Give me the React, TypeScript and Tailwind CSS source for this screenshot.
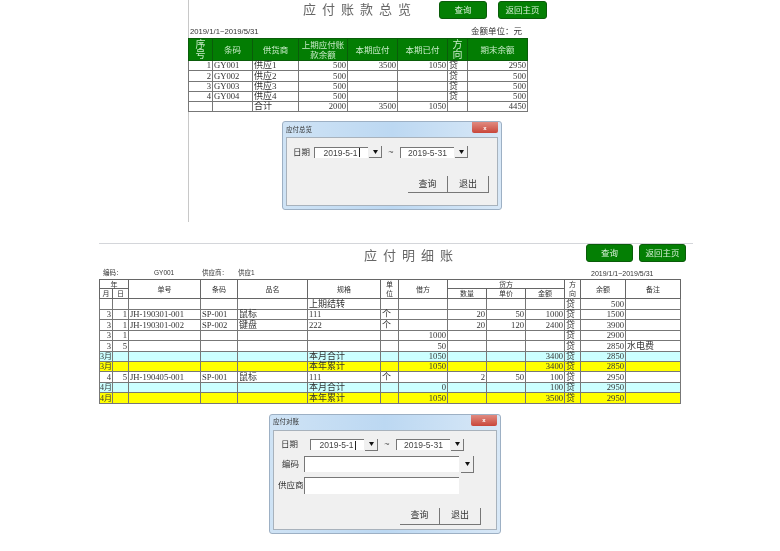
const cjk = "font-['Liberation_Sans','Noto_Sans_CJK_SC',sans-serif]";
const serif = "font-['Liberation_Serif','Noto_Sans_CJK_SC',serif]";

const GreenButton = ({ label, className }: { label: string; className: string }) => (
  <div className={`flex h-[18px] items-center justify-center rounded-[3px] border border-[#0a5c0a] bg-[#047f04] text-[8.5px] text-[#d8f0d8] ${className}`}>
    {label}
  </div>
);

const topCols = [24, 40, 46, 49, 50, 50, 20, 60];
const topRows = [
  ['1', 'GY001', '供应1', '500', '3500', '1050', '贷', '2950'],
  ['2', 'GY002', '供应2', '500', '', '', '贷', '500'],
  ['3', 'GY003', '供应3', '500', '', '', '贷', '500'],
  ['4', 'GY004', '供应4', '500', '', '', '贷', '500'],
  ['', '', '合计', '2000', '3500', '1050', '', '4450'],
];
const topHead = ['序\n号', '条码', '供货商', '上期应付账\n款余额', '本期应付', '本期已付', '方\n向', '期末余额'];

const bottomCols = [13, 16, 72, 37, 70, 73, 18, 49, 39, 39, 39, 16, 45, 55];
const bottomRows: { bg?: string; cells: string[] }[] = [
  { cells: ['', '', '', '', '', '上期结转', '', '', '', '', '', '贷', '500', ''] },
  { cells: ['3', '1', 'JH-190301-001', 'SP-001', '鼠标', '111', '个', '', '20', '50', '1000', '贷', '1500', ''] },
  { cells: ['3', '1', 'JH-190301-002', 'SP-002', '键盘', '222', '个', '', '20', '120', '2400', '贷', '3900', ''] },
  { cells: ['3', '1', '', '', '', '', '', '1000', '', '', '', '贷', '2900', ''] },
  { cells: ['3', '5', '', '', '', '', '', '50', '', '', '', '贷', '2850', '水电费'] },
  { bg: 'bg-[#ccffff]', cells: ['3月', '', '', '', '', '本月合计', '', '1050', '', '', '3400', '贷', '2850', ''] },
  { bg: 'bg-[#ffff00]', cells: ['3月', '', '', '', '', '本年累计', '', '1050', '', '', '3400', '贷', '2850', ''] },
  { cells: ['4', '5', 'JH-190405-001', 'SP-001', '鼠标', '111', '个', '', '2', '50', '100', '贷', '2950', ''] },
  { bg: 'bg-[#ccffff]', cells: ['4月', '', '', '', '', '本月合计', '', '0', '', '', '100', '贷', '2950', ''] },
  { bg: 'bg-[#ffff00]', cells: ['4月', '', '', '', '', '本年累计', '', '1050', '', '', '3500', '贷', '2950', ''] },
];
const bottomLeft = [2, 3, 4, 5, 6, 11, 13];
const isWide = (c: string) => /[^\x00-\x7f]/.test(c);

const Arrow = () => (
  <svg width="5" height="4" viewBox="0 0 5 4">
    <polygon points="0,0 5,0 2.5,4" fill="#111" />
  </svg>
);

const DropButton = ({ className = 'h-[12px]' }: { className?: string }) => (
  <div className={`flex w-[13px] items-center justify-center border-r border-b border-[#777] bg-[#f0f0f0] ${className}`}>
    <Arrow />
  </div>
);

const DateInput = ({ value, caret }: { value: string; caret?: boolean }) => (
  <div className="flex h-[11px] w-[54px] items-center justify-center border-t border-l border-[#777] bg-white text-[8.5px] leading-none text-[#444]">
    {value}
    {caret && <span className="ml-px h-[9px] w-px bg-[#222]" />}
  </div>
);

const DateRow = ({ labelClass }: { labelClass: string }) => (
  <div className="flex items-center">
    <span className={`whitespace-nowrap text-[8.5px] leading-none text-[#333] ${labelClass}`}>日期</span>
    <div className="ml-[4px] flex items-center">
      <DateInput value="2019-5-1" caret />
      <div className="ml-px"><DropButton /></div>
      <span className="w-[18px] text-center text-[9px] leading-none text-[#555]">~</span>
      <DateInput value="2019-5-31" />
      <div className="ml-px"><DropButton /></div>
    </div>
  </div>
);

const DialogButtons = ({ className }: { className: string }) => (
  <div className={`flex text-[9px] text-[#333] ${className}`}>
    <div className="flex h-[17px] w-[40px] items-center justify-center border-r border-b border-[#777] bg-[#f0f0f0]">查询</div>
    <div className="flex h-[17px] w-[41px] items-center justify-center border-r border-b border-[#777] bg-[#f0f0f0]">退出</div>
  </div>
);

const Dialog = ({ title, className, children }: { title: string; className: string; children: React.ReactNode }) => (
  <div className={`relative flex flex-col rounded-[3px] border border-[#9db0c4] bg-gradient-to-r from-[#cfe3f5] via-[#bcd8f2] to-[#d8e8f7] px-[3px] pb-[3px] ${className}`}>
    <div className="flex h-[15px] shrink-0 items-center text-[6.5px] text-[#333]">{title}</div>
    <div className="absolute right-[3px] top-0 flex h-[11px] w-[26px] items-center justify-center rounded-b-[2px] bg-gradient-to-b from-[#e08a80] to-[#c8453a] text-[6px] font-bold leading-none text-white">
      x
    </div>
    <div className="flex-1 border border-[#a8b2bc] bg-[#f0f0f0]">{children}</div>
  </div>
);

export default function App() {
  return (
    <div className={`h-[551px] w-[780px] overflow-hidden bg-white ${cjk} blur-[0.35px]`}>
      {/* 应付账款总览 */}
      <section className="ml-[188px] h-[222px] w-[360px] border-l border-[#c8c8c8]">
        <div className="flex items-start pt-px">
          <h1 className="ml-[114px] mt-px w-[136px] whitespace-nowrap text-[13px] font-normal leading-[15px] tracking-[6px] text-[#666]">
            应付账款总览
          </h1>
          <GreenButton label="查询" className="w-[48px]" />
          <GreenButton label="返回主页" className="ml-[11px] w-[49px]" />
        </div>
        <div className="mt-[6px] flex h-[13px] w-[338px] items-center justify-between pl-px text-[#333]">
          <span className="text-[7.7px] leading-none">2019/1/1~2019/5/31</span>
          <span className="mr-[5px] text-[8.5px] leading-none">金额单位：元</span>
        </div>
        <table className={`-ml-px w-[339px] table-fixed border-collapse text-[8.6px] leading-none text-[#333] ${serif}`}>
          <colgroup>
            {topCols.map((w, i) => <col key={i} style={{ width: w }} />)}
          </colgroup>
          <thead>
            <tr className="h-[22px] bg-[#037d03]">
              {topHead.map((h, i) => (
                <th key={i} className={`whitespace-pre-line border border-[#0a5c0a] p-0 text-center font-normal leading-[10px] text-[#c9ecc9] ${cjk} ${i === 0 || i === 6 ? 'text-[10px]' : 'text-[8.5px]'}`}>{h}</th>
              ))}
            </tr>
          </thead>
          <tbody>
            {topRows.map((row, r) => (
              <tr key={r} className="h-[10.3px]">
                {row.map((c, i) => (
                  <td key={i} className={`whitespace-nowrap border border-[#777] p-0 align-bottom leading-[9px] ${i === 1 || i === 2 || i === 6 ? 'pl-px text-left' : 'pr-px text-right'} ${isWide(c) ? 'text-[9px]' : ''}`}>{c}</td>
                ))}
              </tr>
            ))}
          </tbody>
        </table>
        <Dialog title="应付总览" className="ml-[93px] mt-[9px] h-[89px] w-[220px]">
          <div className="pt-[8px]">
            <DateRow labelClass="ml-[6px] w-[17px]" />
            <DialogButtons className="ml-[121px] mt-[18px]" />
          </div>
        </Dialog>
      </section>

      {/* 应付明细账 */}
      <section className="ml-[99px] mt-[21px] w-[594px] border-t border-[#d4d6da]">
        <div className="flex items-start">
          <h1 className="ml-[265px] mt-[4px] w-[222px] whitespace-nowrap text-[13px] font-normal leading-[15px] tracking-[6px] text-[#666]">
            应付明细账
          </h1>
          <GreenButton label="查询" className="w-[47px]" />
          <GreenButton label="返回主页" className="ml-[6px] w-[47px]" />
        </div>
        <div className="mt-[4px] flex h-[12px] items-center text-[6.5px] leading-none text-[#333]">
          <span className="ml-[4px] w-[51px]">编码：</span>
          <span className="w-[48px]">GY001</span>
          <span className="w-[36px]">供应商：</span>
          <span className="w-[353px]">供应1</span>
          <span className="text-[7px]">2019/1/1~2019/5/31</span>
        </div>
        <table className={`w-[581px] table-fixed border-collapse text-[8.6px] leading-none text-[#333] ${serif}`}>
          <colgroup>
            {bottomCols.map((w, i) => <col key={i} style={{ width: w }} />)}
          </colgroup>
          <thead className={`text-[7px] ${cjk}`}>
            <tr className="h-[9px]">
              <th colSpan={2} className="border border-[#666] p-0 font-normal">年</th>
              {['单号', '条码', '品名', '规格', '单\n位', '借方'].map((h) => (
                <th key={h} rowSpan={2} className="whitespace-pre-line border border-[#666] p-0 font-normal leading-[9px]">{h}</th>
              ))}
              <th colSpan={3} className="border border-[#666] p-0 font-normal">货方</th>
              {['方\n向', '余额', '备注'].map((h) => (
                <th key={h} rowSpan={2} className="whitespace-pre-line border border-[#666] p-0 font-normal leading-[9px]">{h}</th>
              ))}
            </tr>
            <tr className="h-[10px]">
              {['月', '日', '数量', '单价', '金额'].map((h) => (
                <th key={h} className="border border-[#666] p-0 font-normal">{h}</th>
              ))}
            </tr>
          </thead>
          <tbody>
            {bottomRows.map((row, r) => (
              <tr key={r} className={`${r === 0 ? 'h-[11px]' : 'h-[10.4px]'} ${row.bg ?? ''}`}>
                {row.cells.map((c, i) => {
                  const month = c.endsWith('月');
                  const left = bottomLeft.includes(i) || month;
                  return (
                    <td
                      key={i}
                      className={`whitespace-nowrap border border-[#777] p-0 align-bottom leading-[9px] ${left ? (month ? 'text-left' : 'pl-px text-left') : 'pr-px text-right'} ${month ? 'text-[8px]' : isWide(c) ? 'text-[9px]' : ''}`}
                    >
                      {c}
                    </td>
                  );
                })}
              </tr>
            ))}
          </tbody>
        </table>
        <Dialog title="应付对账" className="ml-[170px] mt-[10px] h-[120px] w-[232px]">
          <div className="pt-[8px]">
            <DateRow labelClass="ml-[7px] w-[25px]" />
            <div className="mt-[5px] flex items-center">
              <span className="w-[25px] text-right text-[8.5px] leading-none text-[#333]">编码</span>
              <div className="ml-[5px] h-[16px] w-[155px] border-t border-l border-[#777] bg-white" />
              <div className="ml-[2px]"><DropButton className="h-[17px]" /></div>
            </div>
            <div className="mt-[4px] flex items-center">
              <span className="ml-[4px] w-[25px] whitespace-nowrap text-[8.5px] leading-none text-[#333]">供应商</span>
              <div className="ml-px h-[17px] w-[155px] border-t border-l border-[#777] bg-white" />
            </div>
            <DialogButtons className="ml-[126px] mt-[14px]" />
          </div>
        </Dialog>
      </section>
    </div>
  );
}
